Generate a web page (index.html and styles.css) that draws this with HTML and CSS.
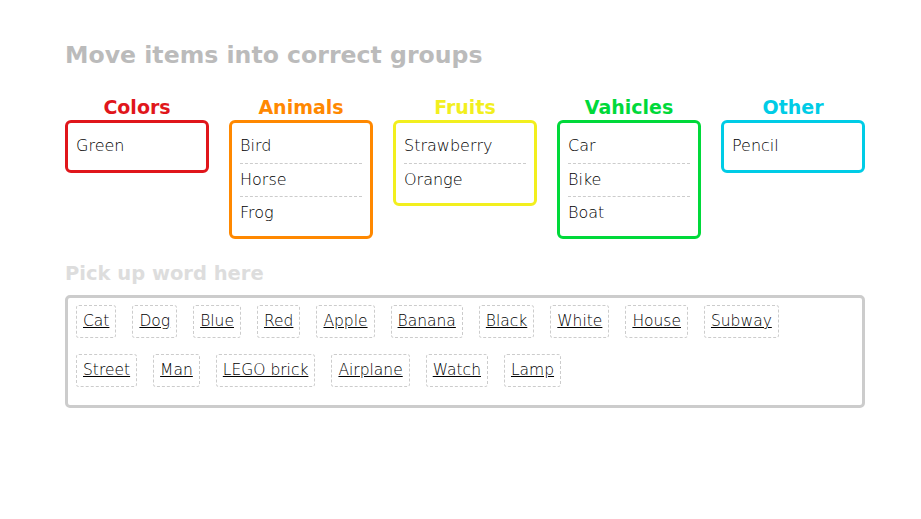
FILE: index.html
```html
<!DOCTYPE html>
<html>
<head>
<meta charset="utf-8">
<link rel="stylesheet" href="styles.css">
</head>
<body>
<div class="page">
  <h1 class="title">Move items into correct groups</h1>
  <div class="groups">
    <div class="group red">
      <div class="group-title">Colors</div>
      <ul class="box"><li>Green</li></ul>
    </div>
    <div class="group orange">
      <div class="group-title">Animals</div>
      <ul class="box"><li>Bird</li><li>Horse</li><li>Frog</li></ul>
    </div>
    <div class="group yellow">
      <div class="group-title">Fruits</div>
      <ul class="box"><li>Strawberry</li><li>Orange</li></ul>
    </div>
    <div class="group green">
      <div class="group-title">Vahicles</div>
      <ul class="box"><li>Car</li><li>Bike</li><li>Boat</li></ul>
    </div>
    <div class="group cyan">
      <div class="group-title">Other</div>
      <ul class="box"><li>Pencil</li></ul>
    </div>
  </div>
  <div class="pick-title">Pick up word here</div>
  <div class="pool">
    <span class="chip">Cat</span><span class="chip">Dog</span><span class="chip">Blue</span><span class="chip">Red</span><span class="chip">Apple</span><span class="chip">Banana</span><span class="chip">Black</span><span class="chip">White</span><span class="chip">House</span><span class="chip">Subway</span><span class="chip">Street</span><span class="chip">Man</span><span class="chip">LEGO brick</span><span class="chip">Airplane</span><span class="chip">Watch</span><span class="chip">Lamp</span>
  </div>
</div>
</body>
</html>
```
FILE: styles.css
```css
html, body {
  margin: 0;
  padding: 0;
  background: #fff;
}
body {
  font-family: "DejaVu Sans", sans-serif;
  color: #000;
}
.page {
  width: 800px;
  padding: 41px 0 0 65px;
}
.title {
  margin: 0;
  font-size: 23.6px;
  font-weight: bold;
  color: #bbbbbb;
  line-height: 29px;
}
.groups {
  display: flex;
  gap: 20px;
  align-items: flex-start;
  margin-top: 25px;
}
.group {
  width: 144px;
}
.group-title {
  text-align: center;
  font-weight: bold;
  font-size: 19px;
  line-height: 24px;
  margin-bottom: 1px;
}
.box {
  list-style: none;
  margin: 0;
  padding: 7px 0;
  border: 3px solid;
  border-radius: 6px;
}
.box li {
  margin: 0 8px;
  height: 33px;
  line-height: 32px;
  font-size: 16px;
  font-weight: 200;
  border-top: 1px dashed #cccccc;
  box-sizing: border-box;
}
.box li:first-child {
  border-top: none;
}
.red .group-title { color: #e0161b; }
.red .box { border-color: #e0161b; }
.orange .group-title { color: #ff8800; }
.orange .box { border-color: #ff8800; }
.yellow .group-title { color: #f2ef1e; }
.yellow .box { border-color: #f2ef1e; }
.green .group-title { color: #00d93a; }
.green .box { border-color: #00d93a; }
.cyan .group-title { color: #00cce6; }
.cyan .box { border-color: #00cce6; }

.pick-title {
  margin-top: 23px;
  font-size: 19.5px;
  font-weight: bold;
  color: #dddddd;
  line-height: 24px;
}
.pool {
  margin-top: 9px;
  border: 3px solid #cccccc;
  border-radius: 5px;
  padding: 7px 8px 18px 8px;
  display: flex;
  flex-wrap: wrap;
  column-gap: 16px;
  row-gap: 16px;
  box-sizing: border-box;
  width: 800px;
  height: 113px;
}
.chip {
  border: 1px dashed #cccccc;
  border-radius: 3px;
  padding: 0 6px;
  height: 33px;
  line-height: 31px;
  box-sizing: border-box;
  font-size: 15.5px;
  font-weight: 200;
  text-decoration: underline;
}
```
